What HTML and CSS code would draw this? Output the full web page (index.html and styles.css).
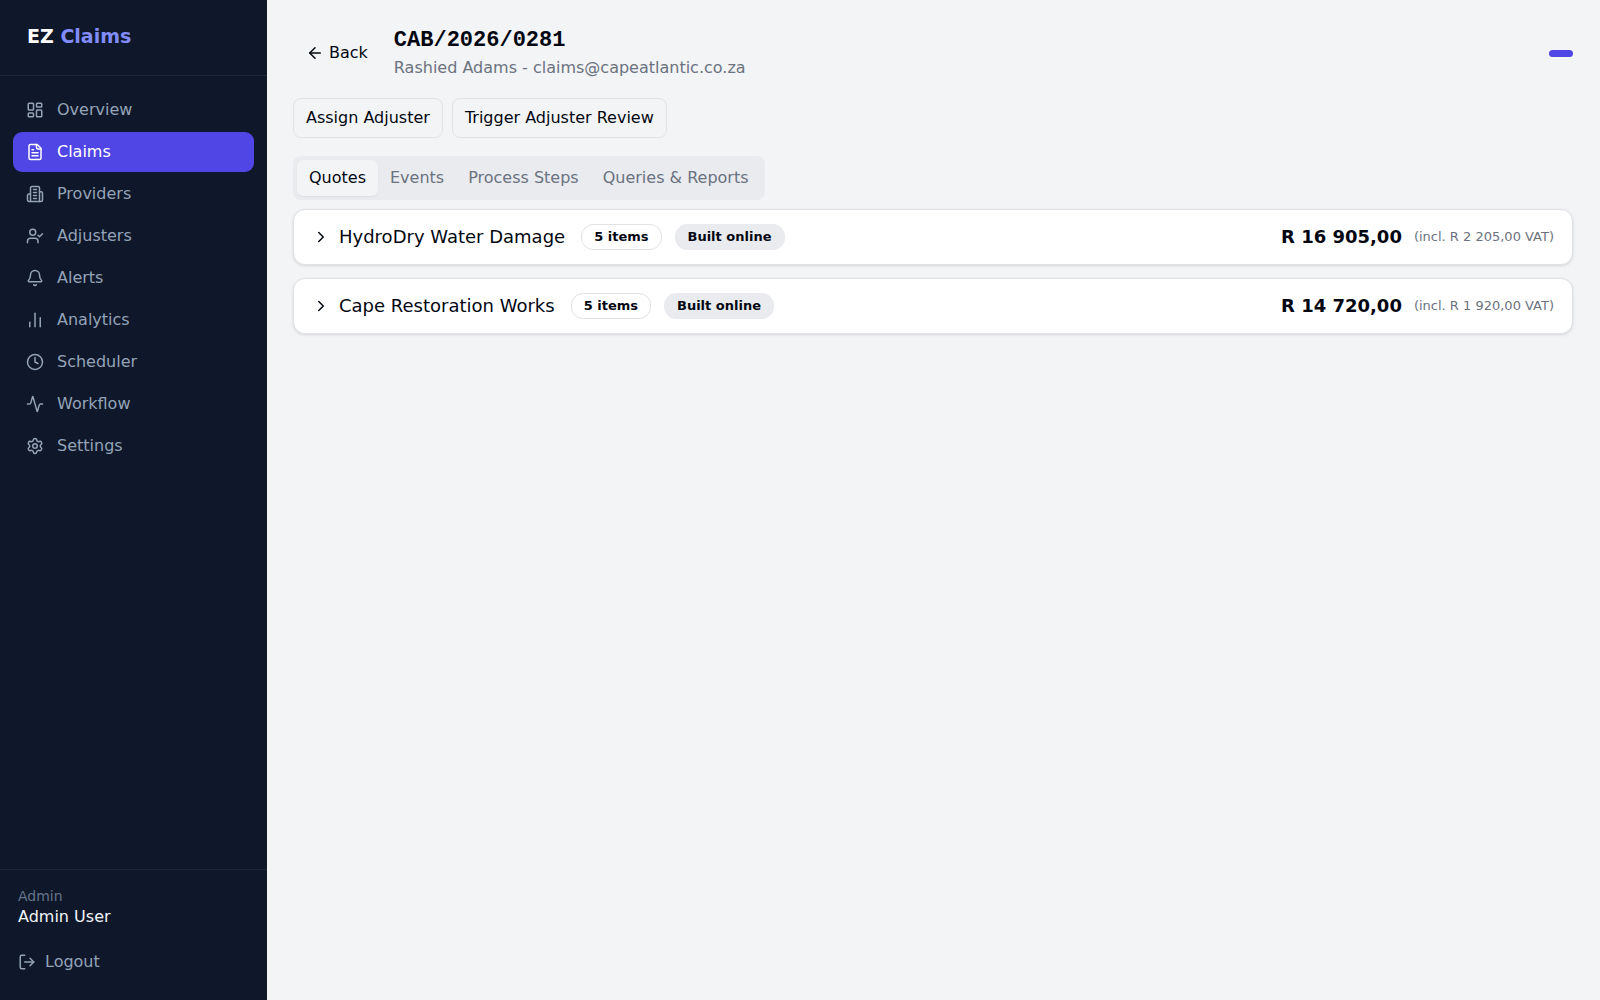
FILE: index.html
```html
<!DOCTYPE html>
<html lang="en">

<head>
    <meta charset="UTF-8">
    <meta name="viewport" content="width=device-width, initial-scale=1.0">
    <title>EZ Claims</title>
    <link rel="stylesheet" href="styles.css">
</head>

<body>

    <aside class="sidebar">
        <div class="logo">EZ <span>Claims</span></div>

        <nav class="nav">
            <a href="#overview">
                <svg class="icon" viewBox="0 0 24 24"><rect width="7" height="9" x="3" y="3" rx="1"/><rect width="7" height="5" x="14" y="3" rx="1"/><rect width="7" height="9" x="14" y="12" rx="1"/><rect width="7" height="5" x="3" y="16" rx="1"/></svg>
                Overview
            </a>
            <a href="#claims" class="active">
                <svg class="icon" viewBox="0 0 24 24"><path d="M15 2H6a2 2 0 0 0-2 2v16a2 2 0 0 0 2 2h12a2 2 0 0 0 2-2V7Z"/><path d="M14 2v4a2 2 0 0 0 2 2h4"/><path d="M10 9H8"/><path d="M16 13H8"/><path d="M16 17H8"/></svg>
                Claims
            </a>
            <a href="#providers">
                <svg class="icon" viewBox="0 0 24 24"><path d="M6 22V4a2 2 0 0 1 2-2h8a2 2 0 0 1 2 2v18Z"/><path d="M6 12H4a2 2 0 0 0-2 2v6a2 2 0 0 0 2 2h2"/><path d="M18 9h2a2 2 0 0 1 2 2v9a2 2 0 0 1-2 2h-2"/><path d="M10 6h4"/><path d="M10 10h4"/><path d="M10 14h4"/><path d="M10 18h4"/></svg>
                Providers
            </a>
            <a href="#adjusters">
                <svg class="icon" viewBox="0 0 24 24"><path d="m16 11 2 2 4-4"/><path d="M16 21v-2a4 4 0 0 0-4-4H6a4 4 0 0 0-4 4v2"/><circle cx="9" cy="7" r="4"/></svg>
                Adjusters
            </a>
            <a href="#alerts">
                <svg class="icon" viewBox="0 0 24 24"><path d="M10.268 21a2 2 0 0 0 3.464 0"/><path d="M3.262 15.326A1 1 0 0 0 4 17h16a1 1 0 0 0 .74-1.673C19.41 13.956 18 12.499 18 8A6 6 0 0 0 6 8c0 4.499-1.411 5.956-2.738 7.326"/></svg>
                Alerts
            </a>
            <a href="#analytics">
                <svg class="icon" viewBox="0 0 24 24"><path d="M5 21v-6"/><path d="M12 21V3"/><path d="M19 21V9"/></svg>
                Analytics
            </a>
            <a href="#scheduler">
                <svg class="icon" viewBox="0 0 24 24"><circle cx="12" cy="12" r="10"/><path d="M12 6v6l4 2"/></svg>
                Scheduler
            </a>
            <a href="#workflow">
                <svg class="icon" viewBox="0 0 24 24"><path d="M22 12h-2.48a2 2 0 0 0-1.93 1.46l-2.35 8.36a.25.25 0 0 1-.48 0L9.24 2.18a.25.25 0 0 0-.48 0l-2.35 8.36A2 2 0 0 1 4.49 12H2"/></svg>
                Workflow
            </a>
            <a href="#settings">
                <svg class="icon" viewBox="0 0 24 24"><path d="M9.671 4.136a2.34 2.34 0 0 1 4.659 0 2.34 2.34 0 0 0 3.319 1.915 2.34 2.34 0 0 1 2.33 4.033 2.34 2.34 0 0 0 0 3.831 2.34 2.34 0 0 1-2.33 4.033 2.34 2.34 0 0 0-3.319 1.915 2.34 2.34 0 0 1-4.659 0 2.34 2.34 0 0 0-3.32-1.915 2.34 2.34 0 0 1-2.33-4.033 2.34 2.34 0 0 0 0-3.831A2.34 2.34 0 0 1 6.35 6.051a2.34 2.34 0 0 0 3.319-1.915"/><circle cx="12" cy="12" r="3"/></svg>
                Settings
            </a>
        </nav>

        <div class="user">
            <div class="user-role">Admin</div>
            <div class="user-name">Admin User</div>
            <button type="button" class="logout">
                <svg class="icon" viewBox="0 0 24 24"><path d="m16 17 5-5-5-5"/><path d="M21 12H9"/><path d="M9 21H5a2 2 0 0 1-2-2V5a2 2 0 0 1 2-2h4"/></svg>
                Logout
            </button>
        </div>
    </aside>

    <main class="content">
        <header class="claim-header">
            <button type="button" class="back">
                <svg class="icon" viewBox="0 0 24 24"><path d="m12 19-7-7 7-7"/><path d="M19 12H5"/></svg>
                Back
            </button>
            <div class="claim-title">
                <h1>CAB/2026/0281</h1>
                <p>Rashied Adams - claims@capeatlantic.co.za</p>
            </div>
            <span class="status"></span>
        </header>

        <div class="actions">
            <button type="button">Assign Adjuster</button>
            <button type="button">Trigger Adjuster Review</button>
        </div>

        <div class="tabs" role="tablist">
            <button type="button" role="tab" aria-selected="true" class="active">Quotes</button>
            <button type="button" role="tab" aria-selected="false">Events</button>
            <button type="button" role="tab" aria-selected="false">Process Steps</button>
            <button type="button" role="tab" aria-selected="false">Queries &amp; Reports</button>
        </div>

        <section class="quotes">
            <button type="button" class="quote" aria-expanded="false">
                <svg class="icon" viewBox="0 0 24 24"><path d="m9 18 6-6-6-6"/></svg>
                <span class="provider">HydroDry Water Damage</span>
                <span class="badge outline">5 items</span>
                <span class="badge">Built online</span>
                <span class="amount">R 16 905,00</span>
                <span class="vat">(incl. R 2 205,00 VAT)</span>
            </button>
            <button type="button" class="quote" aria-expanded="false">
                <svg class="icon" viewBox="0 0 24 24"><path d="m9 18 6-6-6-6"/></svg>
                <span class="provider">Cape Restoration Works</span>
                <span class="badge outline">5 items</span>
                <span class="badge">Built online</span>
                <span class="amount">R 14 720,00</span>
                <span class="vat">(incl. R 1 920,00 VAT)</span>
            </button>
        </section>
    </main>

</body>

</html>
```
FILE: styles.css
```css
:root {
    --primary: #4f46e5;
    --sidebar: #0f172a;
    --sidebar-border: #1d263a;
    --sidebar-text: #94a3b8;
    --background: #f3f4f6;
    --muted: #e9ebef;
    --muted-text: #6b7280;
    --text: #030712;
    --border: #e0e2e6;
}

* {
    box-sizing: border-box;
}

body {
    margin: 0;
    display: flex;
    min-height: 100vh;
    font-family: "DejaVu Sans", sans-serif;
    font-size: 16px;
    line-height: 22px;
    color: var(--text);
    background-color: var(--background);
}

button {
    font: inherit;
    color: inherit;
    background: none;
    border: none;
    padding: 0;
    cursor: pointer;
}

.icon {
    width: 18px;
    height: 18px;
    flex-shrink: 0;
    fill: none;
    stroke: currentColor;
    stroke-width: 2;
    stroke-linecap: round;
    stroke-linejoin: round;
}

/* sidebar */
.sidebar {
    width: 267px;
    flex-shrink: 0;
    display: flex;
    flex-direction: column;
    background-color: var(--sidebar);
    color: var(--sidebar-text);
}

.logo {
    padding: 22px 27px 25px;
    border-bottom: 1px solid var(--sidebar-border);
    font-size: 19px;
    line-height: 28px;
    font-weight: bold;
    color: white;
}

.logo span {
    color: #818cf8;
}

.nav {
    flex: 1;
    display: flex;
    flex-direction: column;
    gap: 2px;
    padding: 14px 13px;
}

.nav a {
    display: flex;
    align-items: center;
    gap: 13px;
    height: 40px;
    padding: 0 13px;
    border-radius: 9px;
    color: inherit;
    text-decoration: none;
}

.nav a.active {
    background-color: var(--primary);
    color: white;
}

.user {
    padding: 17px 18px 27px;
    border-top: 1px solid var(--sidebar-border);
}

.user-role {
    font-size: 14px;
    line-height: 18px;
    color: #64748b;
}

.user-name {
    margin-bottom: 22px;
    line-height: 24px;
    color: #f1f5f9;
}

.logout {
    display: flex;
    align-items: center;
    gap: 9px;
}

/* claim page */
.content {
    flex: 1;
    min-width: 0;
    padding: 26px 27px 26px 26px;
}

.claim-header {
    display: flex;
    align-items: center;
    gap: 13px;
}

.back {
    display: flex;
    align-items: center;
    gap: 5px;
    height: 36px;
    padding: 0 13px;
}

.claim-title h1 {
    margin: 0;
    font-family: "Liberation Mono", monospace;
    font-size: 22px;
    line-height: 30px;
}

.claim-title p {
    margin: 0;
    line-height: 24px;
    color: var(--muted-text);
}

.status {
    width: 24px;
    height: 7px;
    margin-left: auto;
    border-radius: 4px;
    background-color: var(--primary);
}

.actions {
    display: flex;
    gap: 9px;
    margin-top: 18px;
}

.actions button {
    height: 40px;
    padding: 0 12px;
    border: 1px solid var(--border);
    border-radius: 8px;
}

.tabs {
    display: flex;
    width: fit-content;
    margin-top: 18px;
    padding: 4px;
    border-radius: 8px;
    background-color: var(--muted);
    color: var(--muted-text);
}

.tabs button {
    height: 36px;
    padding: 0 12px;
    border-radius: 6px;
}

.tabs button.active {
    background-color: var(--background);
    color: var(--text);
    box-shadow: 0 1px 2px rgba(0, 0, 0, 0.06);
}

.quotes {
    display: flex;
    flex-direction: column;
    gap: 13px;
    margin-top: 9px;
}

.quote {
    display: flex;
    align-items: center;
    height: 56px;
    padding: 0 18px;
    border: 1px solid var(--border);
    border-radius: 12px;
    background-color: white;
    box-shadow: 0 1px 3px rgba(0, 0, 0, 0.12);
}

.provider {
    margin: 0 16px 0 9px;
    font-size: 18px;
}

.badge {
    margin-right: 13px;
    padding: 2px 12px;
    border: 1px solid var(--muted);
    border-radius: 12px;
    background-color: var(--muted);
    font-size: 13px;
    line-height: 20px;
    font-weight: bold;
}

.badge.outline {
    border-color: var(--border);
    background-color: transparent;
}

.amount {
    margin-left: auto;
    font-size: 18px;
    font-weight: bold;
}

.vat {
    margin-left: 12px;
    font-size: 13px;
    color: var(--muted-text);
}
```
